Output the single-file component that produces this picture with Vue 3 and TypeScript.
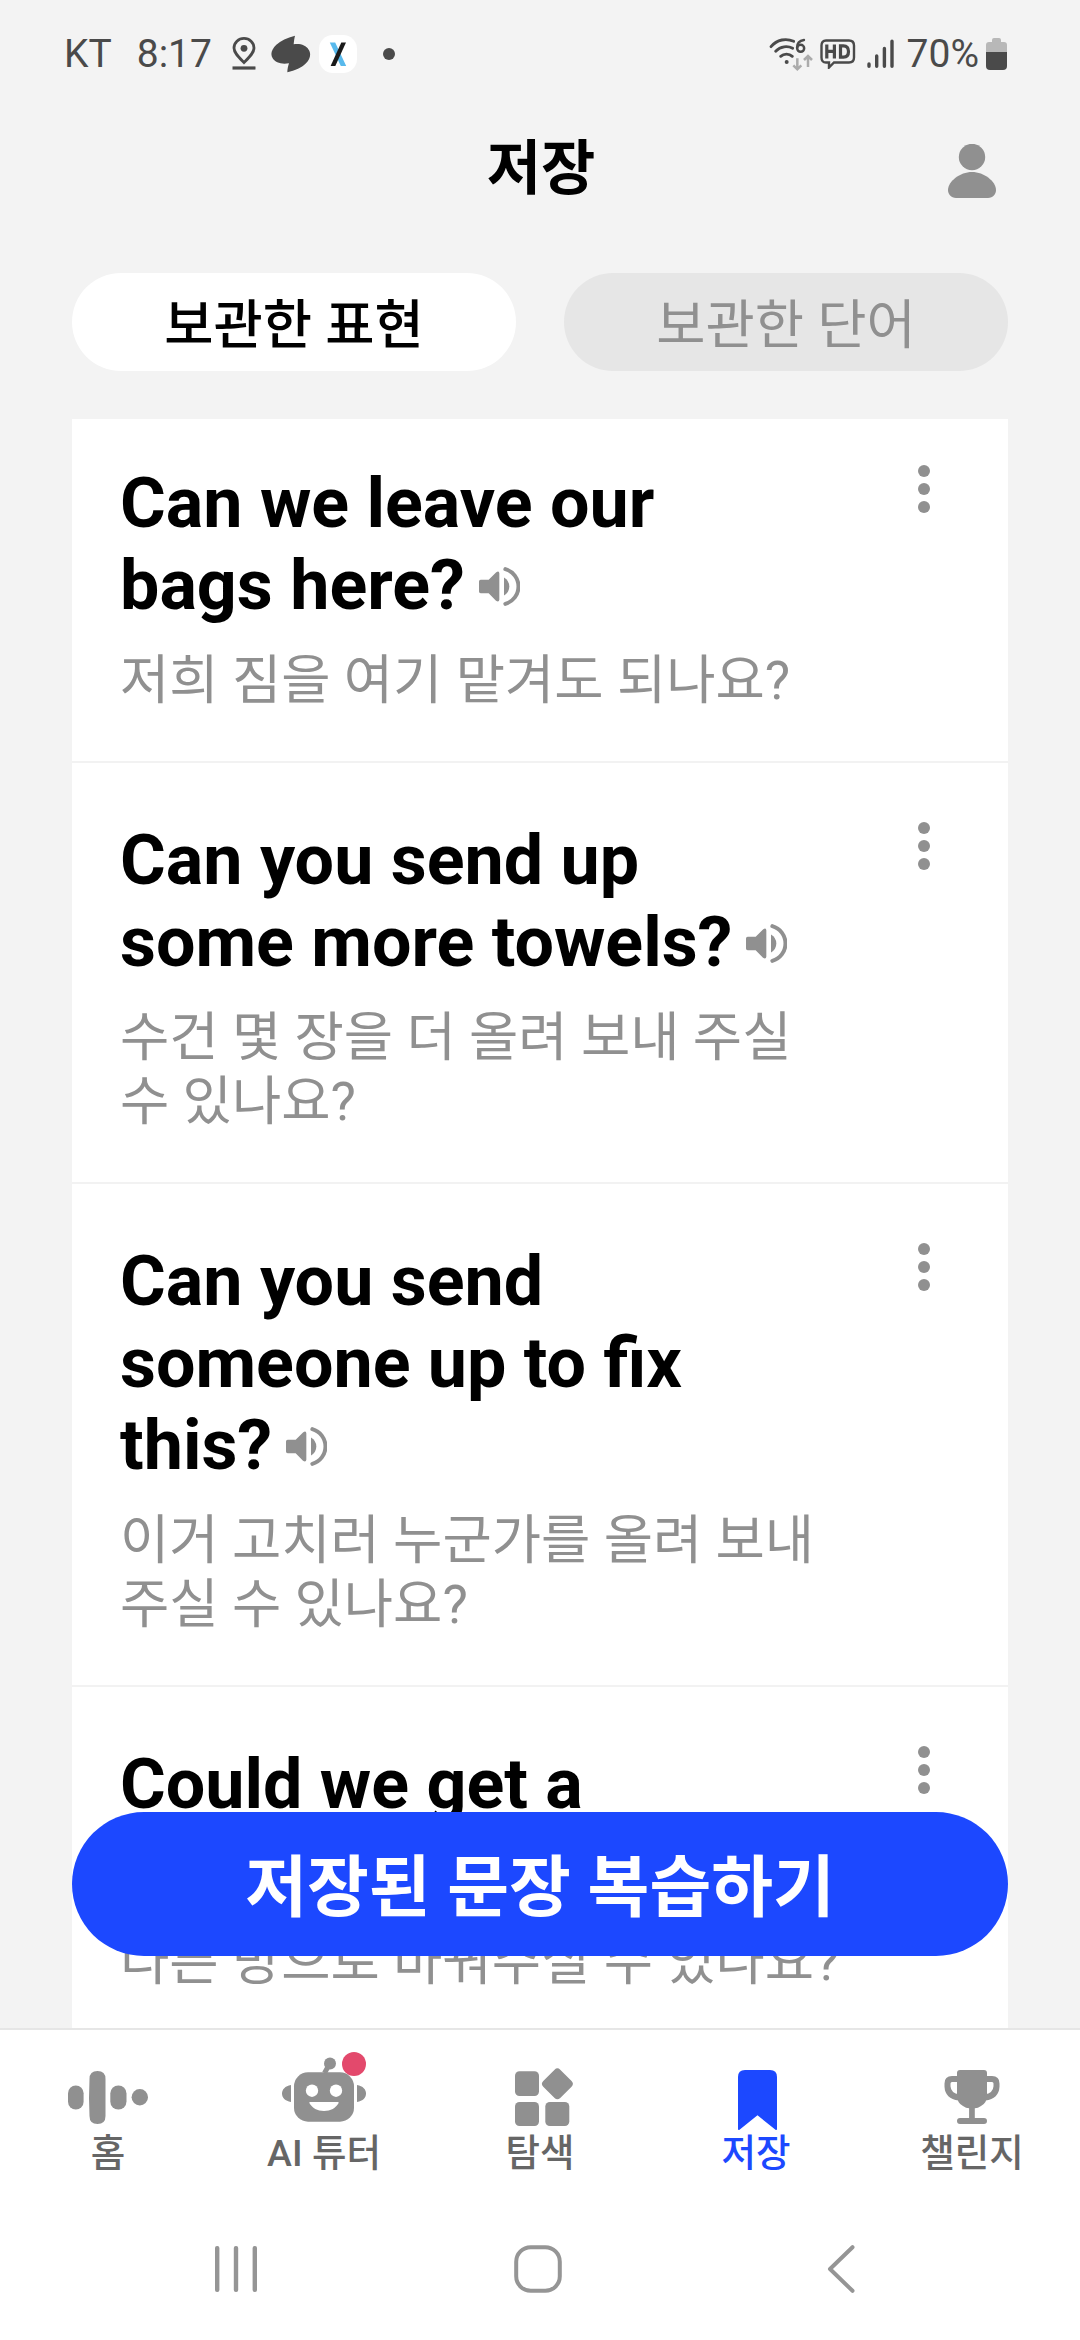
<script setup lang="ts">
interface Phrase {
  title: string[]
  translation: string[]
}

const phrases: Phrase[] = [
  { title: ['Can we leave our', 'bags here?'], translation: ['저희 짐을 여기 맡겨도 되나요?'] },
  { title: ['Can you send up', 'some more towels?'], translation: ['수건 몇 장을 더 올려 보내 주실', '수 있나요?'] },
  { title: ['Can you send', 'someone up to fix', 'this?'], translation: ['이거 고치러 누군가를 올려 보내', '주실 수 있나요?'] },
  { title: ['Could we get a', ''], translation: ['다른 방으로 바꿔주실 수 있나요?'] },
]

const navItems = [
  { id: 'home', label: '홈' },
  { id: 'tutor', label: 'AI 튜터' },
  { id: 'explore', label: '탐색' },
  { id: 'saved', label: '저장' },
  { id: 'challenge', label: '챌린지' },
]
const activeId = 'saved'
</script>

<template>
  <div class="screen">
    <header class="status">
      <div class="status-left">
        <span class="carrier">KT</span>
        <span class="clock">8:17</span>
        <svg class="pin" width="24" height="34" viewBox="0 0 24 34" fill="none" stroke="#4a4a4a" stroke-width="2.8">
          <path d="M12 25.5C7 20.5 2 16 2 11a10 9.6 0 0 1 20 0C22 16 17 20.500 12 25.500Z" />
          <circle cx="12" cy="11.300" r="3.400" fill="#4a4a4a" stroke="none" />
          <path d="M.5 31h23" stroke-width="3.200" />
        </svg>
        <svg class="leaf" width="40" height="38" viewBox="0 0 120 114" fill="#4a4a4a">
          <path d="M72 2C48 8 29 17 16 29C2 42-3 58 5 70C13 83 31 89 54 85C51 94 49 103 49 112C72 107 93 98 105 85C118 72 121 55 113 44C105 31 88 25 68 28C69 18 70 10 72 2Z" />
        </svg>
        <svg class="xapp" width="38" height="38" viewBox="0 0 38 38">
          <rect width="38" height="38" rx="14" fill="#fff" />
          <path d="M10.800 7.500h5.400l11 23.500h-5.400Z" fill="#58b9ec" />
          <path d="M22.300 7.500h4.700l-10.700 23.500h-4.700Z" fill="#1a1a1a" />
        </svg>
        <svg class="dot" width="12" height="12" viewBox="0 0 12 12"><circle cx="6" cy="6" r="6" fill="#4a4a4a" /></svg>
      </div>
      <div class="status-right">
        <svg class="wifi" width="44" height="35" viewBox="56 50 132 105" fill="none" stroke-linecap="round">
          <g stroke="#4a4a4a" stroke-width="8.500">
            <path d="M62 79C80 57 108 53 130 63" />
            <path d="M76 93C91 77 112 76 127 84" />
            <path d="M91 108C101 99 116 99 126 108" />
            <path d="M161 59C147 61 140 70 140 82" stroke-width="7" />
            <circle cx="151" cy="84" r="10.500" stroke-width="7.500" />
          </g>
          <circle cx="109" cy="125" r="6" fill="#4a4a4a" />
          <g stroke="#ababab" stroke-width="7.500" stroke-linecap="butt">
            <path d="M141 114v33M129 135l12 12 12-12M173 140v-33M161 119l12-12 12 12" />
          </g>
        </svg>
        <svg class="hd" width="36" height="30" viewBox="0 0 36 30" fill="none" stroke="#4a4a4a">
          <path d="M6 1.500h23q5 0 5 5v12q0 5-5 5H14l-5 5v-5H6q-4.500 0-4.500-5v-12q0-5 4.500-5Z" stroke-width="2.400" />
          <path d="M6.800 5.500v14M14.400 5.500v14M7 12.300h7M20.500 6.900v11.200h3q5 0 5-5.600t-5-5.600Z" stroke-width="3.200" />
        </svg>
        <svg class="signal" width="28" height="30" viewBox="0 0 28 30" stroke="#4a4a4a" stroke-width="3.400" stroke-linecap="round">
          <path d="M2 25v2.300M9.700 17v10.300M17.400 9.500v17.800M25 2.200v25.100" />
        </svg>
        <span class="percent">70%</span>
        <svg class="battery" width="21" height="32" viewBox="0 0 21 32">
          <path d="M6 2q0-2 2-2h5q2 0 2 2v2h3q3 0 3 3v8H0V7q0-3 3-3h3Z" fill="#b8b8b8" />
          <path d="M0 14h21v14q0 4-4 4H4q-4 0-4-4Z" fill="#4a4a4a" />
        </svg>
      </div>
    </header>

    <div class="app-bar">
      <h1>저장</h1>
      <svg class="profile" width="48" height="54" viewBox="0 0 48 54" fill="#909090">
        <circle cx="24" cy="13" r="13.200" />
        <path d="M24 28C36 28 48 37.500 48 46c0 4-3 8-8 8H8c-5 0-8-4-8-8C0 37.500 12 28 24 28Z" />
      </svg>
    </div>

    <div class="tabs">
      <button class="tab tab-active">보관한 표현</button>
      <button class="tab">보관한 단어</button>
    </div>

    <main class="list">
      <article v-for="(phrase, i) in phrases" :key="i" class="item">
        <div class="copy">
          <h2>
            <span v-for="(line, n) in phrase.title" :key="n" class="line">
              {{ line }}<svg v-if="n === phrase.title.length - 1" class="speaker" width="41" height="39" viewBox="1251 380 123 116" fill="#909090">
                <path d="M1256 418h24l22-22q9-7 10 2v80q-1 8-10 3l-22-23h-24q-5 0-5-5v-30q0-5 5-5Z" />
                <path d="M1326 411q16 10 16 27t-16 27Z" />
                <path d="M1330 386a54 54 0 0 1 0 104" fill="none" stroke="#909090" stroke-width="12" stroke-linecap="round" />
              </svg>
            </span>
          </h2>
          <p><span v-for="(line, n) in phrase.translation" :key="n" class="line">{{ line }}</span></p>
        </div>
        <svg class="more" width="12" height="48" viewBox="0 0 12 48" fill="#909090">
          <circle cx="6" cy="6" r="6" /><circle cx="6" cy="24" r="6" /><circle cx="6" cy="42" r="6" />
        </svg>
      </article>
      <button class="review">저장된 문장 복습하기</button>
    </main>

    <nav class="nav">
      <a v-for="item in navItems" :key="item.id" class="nav-item" :class="{ active: item.id === activeId }">
        <svg width="96" height="90" viewBox="0 0 96 90" fill="#909090">
          <template v-if="item.id === 'home'">
            <rect x="8" y="41.500" width="15.600" height="24" rx="7.800" />
            <path d="M29.500 35q0-8 8-8t8 8v37q0 8-8 8t-8-8q-1-18 0-37Z" />
            <rect x="50.300" y="41.500" width="16.200" height="24" rx="8" />
            <circle cx="79.800" cy="53.300" r="8.200" />
          </template>
          <template v-else-if="item.id === 'tutor'">
            <rect x="18" y="28.300" width="60" height="49.400" rx="14" />
            <path d="M15 41v17C9 57 6 53.500 6 49.500S9 42 15 41ZM81 41v17c6-1 9-4.500 9-8.500S87 42 81 41Z" />
            <circle cx="54" cy="19.500" r="6" />
            <path d="M53 21l-4.500 8" stroke="#909090" stroke-width="5" />
            <circle cx="36" cy="46.700" r="6.200" fill="#fff" />
            <circle cx="60" cy="46.700" r="6.200" fill="#fff" />
            <path d="M34 58h28q1 0 .6 1C60 64 54.500 67 48 67s-12-3-14.600-8q-.4-1 .6-1Z" fill="#fff" />
            <circle cx="78" cy="20" r="12" fill="#e3496c" />
          </template>
          <template v-else-if="item.id === 'explore'">
            <rect x="23" y="27.200" width="24" height="24.800" rx="4.500" />
            <rect x="23" y="58" width="24" height="24" rx="4.500" />
            <rect x="53.300" y="58" width="24" height="24" rx="4.500" />
            <rect x="53.400" y="27.800" width="24" height="24" rx="4" transform="rotate(45 65.400 39.800)" />
          </template>
          <path v-else-if="item.id === 'saved'" d="M37 26h25q7 0 7 7v52q0 1.500-1.500.8L49.500 71.300 31.500 85.800q-1.500.7-1.500-.8V33q0-7 7-7Z" fill="#1c48ff" />
          <template v-else>
            <path d="M36 26h24q3 0 3 3v22q0 8-6 11-3 2.300-6.200 2.300V74H60q3 0 3 3t-3 3H36q-3 0-3-3t3-3h9.100v-9.700Q42 64.300 39 62q-6-3-6-11V29q0-3 3-3Z" />
            <path d="M33 35h-5q-4.500 0-4.500 4.500v3Q24 52 35 53.500M63 35h5q4.500 0 4.500 4.500v3Q72 52 61 53.500" fill="none" stroke="#909090" stroke-width="6" />
          </template>
        </svg>
        <span>{{ item.label }}</span>
      </a>
    </nav>

    <footer class="system-nav">
      <svg width="42" height="46" viewBox="0 0 42 46" fill="#959595">
        <rect width="4.400" height="46" rx="2" /><rect x="18.800" width="4.400" height="46" rx="2" /><rect x="37.600" width="4.400" height="46" rx="2" />
      </svg>
      <svg class="home-key" width="48" height="48" viewBox="0 0 48 48" fill="none" stroke="#959595" stroke-width="4">
        <rect x="2.200" y="2.200" width="43.600" height="43.600" rx="14.500" />
      </svg>
      <svg class="back-key" width="28" height="48" viewBox="0 0 28 48" fill="none" stroke="#959595" stroke-width="4" stroke-linecap="round" stroke-linejoin="round">
        <path d="M25.500 2.200 3 24l22.500 21.800" />
      </svg>
    </footer>
  </div>
</template>

<style scoped>
.screen {
  width: 1080px;
  height: 2340px;
  overflow: hidden;
  display: flex;
  flex-direction: column;
  background: #f3f3f3;
  font-family: Roboto, "Noto Sans CJK KR", sans-serif;
  color: #000;
}
svg { display: block; flex: none; }
button { border: 0; padding: 0; font-family: inherit; }

.status {
  height: 108px;
  flex: none;
  display: flex;
  justify-content: space-between;
  align-items: center;
  padding: 0 73px 0 64px;
  color: #4a4a4a;
  font-size: 39px;
  line-height: 46px;
}
.status-left, .status-right { display: flex; align-items: center; }
.clock { margin-left: 25px; width: 73px; }
.pin { margin-left: 22px; }
.leaf { margin-left: 15px; }
.xapp { margin-left: 8px; }
.dot { margin-left: 26px; }
.hd { margin-left: 7px; }
.signal { margin-left: 11px; }
.percent { margin: 0 7px 0 12px; }

.app-bar {
  height: 165px;
  flex: none;
  display: grid;
  grid-template-columns: 48px 1fr 48px;
  padding: 0 84px;
}
h1 {
  grid-column: 2;
  margin: 17px 0 0 2px;
  text-align: center;
  font-size: 59px;
  line-height: 88px;
  font-weight: 700;
}
.profile { margin-top: 36px; }

.tabs { flex: none; display: flex; gap: 48px; padding: 0 72px; }
.tab {
  flex: 1;
  height: 98px;
  padding-top: 7px;
  border-radius: 49px;
  background: #e6e6e6;
  color: #909090;
  font-size: 53.5px;
  line-height: 91px;
}
.tab-active { background: #fff; color: #000; font-weight: 500; }

.list {
  position: relative;
  height: 1609px;
  flex: none;
  margin: 48px 72px 0;
  background: #fff;
  overflow: hidden;
}
.item {
  display: flex;
  justify-content: space-between;
  padding: 56px 78px 48px 48px;
  border-bottom: 2px solid #f2f2f2;
}
.item:first-child { padding-top: 43px; }
.more { margin-top: 3px; }
h2 { margin: 0; font-size: 70px; line-height: 82px; font-weight: 700; }
.line { display: flex; align-items: center; white-space: nowrap; }
h2 .line { height: 82px; }
.speaker { margin: 2px 0 0 14px; }
p { margin: 23px 0 0; color: #909090; font-size: 53.6px; line-height: 64px; }
p .line { height: 64px; }
.review {
  position: absolute;
  left: 0;
  bottom: 72px;
  width: 936px;
  height: 144px;
  padding-top: 8px;
  border-radius: 72px;
  background: #1c48ff;
  color: #fff;
  font-size: 67.2px;
  font-weight: 700;
  line-height: 136px;
}

.nav {
  height: 170px;
  flex: none;
  display: flex;
  background: #fff;
  border-top: 2px solid #e6e6e6;
}
.nav-item {
  flex: 1;
  display: flex;
  flex-direction: column;
  align-items: center;
  padding-top: 14px;
  color: #666;
  font-size: 37.5px;
  line-height: 38px;
  font-weight: 500;
}
.nav-item.active { color: #1c48ff; }

.system-nav {
  flex: 1;
  display: flex;
  align-items: center;
  padding: 0 0 2px 215px;
  background: #fff;
}
.home-key { margin-left: 257px; }
.back-key { margin-left: 265px; }
</style>
